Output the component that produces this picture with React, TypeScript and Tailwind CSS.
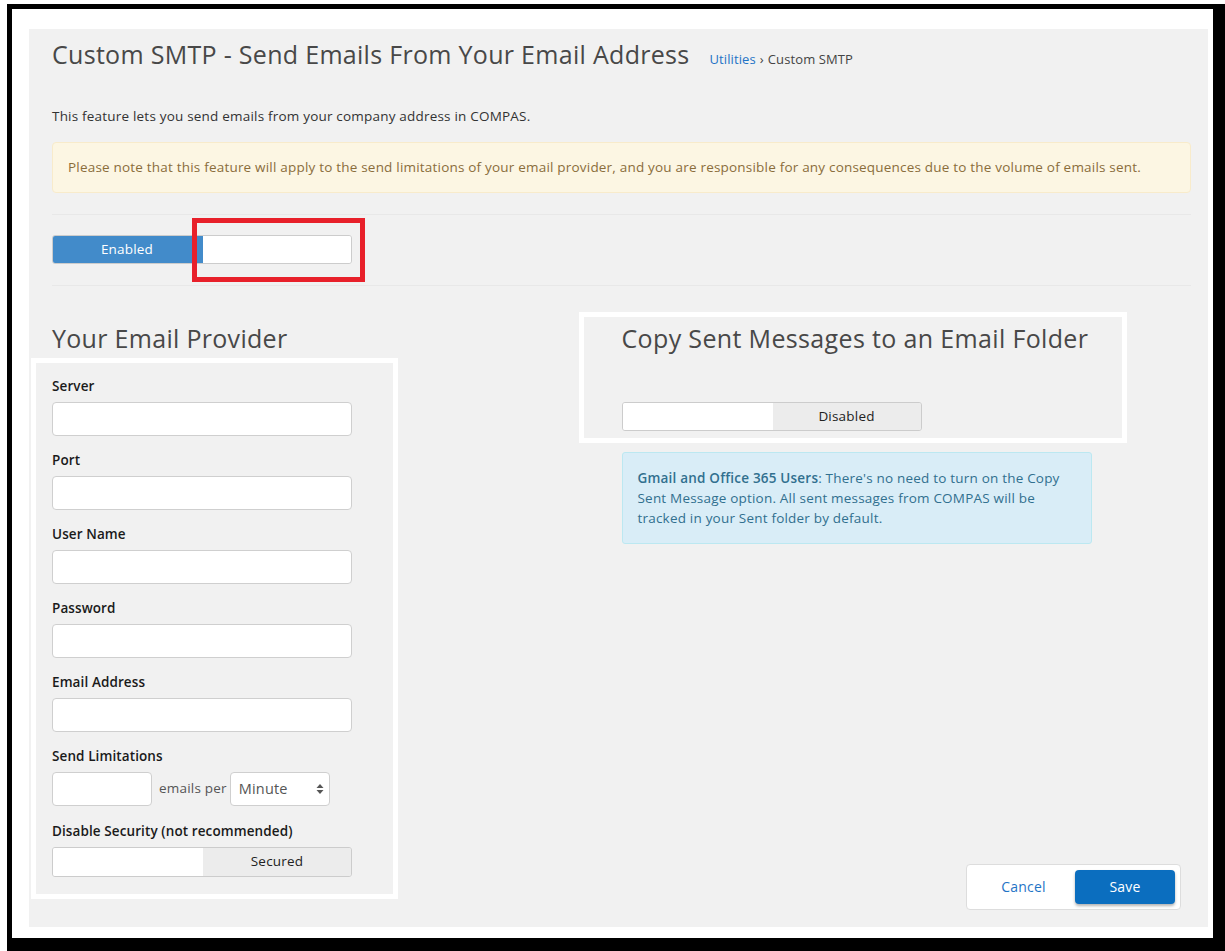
import React from "react";

const font = { fontFamily: '"Open Sans", "Noto Sans", sans-serif' };

function Field({ label }: { label: string }) {
  return (
    <div className="mb-[15px]">
      <div className="text-[13.5px] leading-[18px] font-semibold text-[#1a1a1a] mb-[7px] tracking-[0.1px]">{label}</div>
      <div className="w-[300px] h-[34px] bg-white border border-[#cfcfcf] rounded-[4px]" />
    </div>
  );
}

function UpDown() {
  return (
    <svg width="8" height="12" viewBox="0 0 8 12" className="text-[#555]">
      <path d="M4 1 L7.5 5 L0.5 5 Z" fill="currentColor" />
      <path d="M4 11 L7.5 7 L0.5 7 Z" fill="currentColor" />
    </svg>
  );
}

export default function App() {
  return (
    <div className="w-[1225px] h-[951px] overflow-hidden bg-white pl-[7px] pt-[4px]" style={font}>
      <div className="w-[1221px] h-[949px] border-black border-l-[5px] border-t-[5px] border-r-[15px] border-b-[15px] pl-[17px] pt-[20px]">
        <div className="w-[1179px] h-[898px] bg-[#f1f1f1] pl-[23px] pr-[17px] pt-[10px] flex flex-col">
          {/* Header */}
          <div className="flex items-baseline">
            <h1 className="text-[25px] leading-[30px] text-[#484848] font-normal tracking-[0.3px]">
              Custom SMTP - Send Emails From Your Email Address
            </h1>
            <div className="ml-[20px] text-[13px] text-[#444] tracking-[0.1px]">
              <span className="text-[#1f74c6]">Utilities</span>
              <span className="mx-[4px]">›</span>
              <span>Custom SMTP</span>
            </div>
          </div>

          <p className="mt-[36px] text-[13.5px] leading-[20px] text-[#333] tracking-[0.2px]">
            This feature lets you send emails from your company address in COMPAS.
          </p>

          <div className="mt-[16px] h-[51px] flex items-center px-[15px] bg-[#fcf6e3] border border-[#f8ebcb] rounded-[4px] text-[13.5px] text-[#8a6d3b] tracking-[0.2px]">
            Please note that this feature will apply to the send limitations of your email provider, and you are responsible for any consequences due to the volume of emails sent.
          </div>

          <div className="mt-[21px] h-px bg-[#e8e8e8]" />

          {/* Enabled toggle */}
          <div className="mt-[20px] relative w-[300px] h-[29px] flex rounded-[3px] border border-[#cccccc] overflow-hidden text-[13.5px] tracking-[0.2px]">
            <div className="w-[148px] h-full bg-[#428bca] text-white flex items-center justify-center">Enabled</div>
            <div className="flex-1 h-full bg-white border-l-[2px] border-[#428bca]" />
          </div>
          <div className="relative h-0">
            <div className="absolute left-[140px] top-[-46px] w-[173px] h-[64px] border-[5px] border-[#e8202a]" />
          </div>

          <div className="mt-[21px] h-px bg-[#e8e8e8]" />

          {/* Columns */}
          <div className="mt-[38px] grid grid-cols-2">
            <div className="relative pb-[33px]">
              <div className="absolute left-[-21px] top-[34px] w-[367px] h-[541px] border-[5px] border-white" />
              <h2 className="text-[25px] leading-[28px] text-[#484848] font-normal tracking-[0.3px]">Your Email Provider</h2>
              <div className="mt-[25px]">
                <Field label="Server" />
                <Field label="Port" />
                <Field label="User Name" />
                <Field label="Password" />
                <Field label="Email Address" />
                <div className="text-[13.5px] leading-[18px] font-semibold text-[#1a1a1a] mb-[7px] tracking-[0.1px]">Send Limitations</div>
                <div className="flex items-center h-[34px]">
                  <div className="w-[100px] h-[34px] bg-white border border-[#cfcfcf] rounded-[4px]" />
                  <span className="ml-[7px] text-[13.5px] text-[#555] tracking-[0.2px]">emails per</span>
                  <div className="ml-[3px] w-[100px] h-[34px] bg-white border border-[#cfcfcf] rounded-[4px] flex items-center justify-between pl-[8px] pr-[5px] text-[14.5px] text-[#555] tracking-[0.2px]">
                    <span>Minute</span>
                    <UpDown />
                  </div>
                </div>
                <div className="mt-[16px] text-[13.5px] leading-[18px] font-semibold text-[#1a1a1a] mb-[7px] tracking-[0.1px]">
                  Disable Security (not recommended)
                </div>
                <div className="w-[300px] h-[30px] flex rounded-[3px] border border-[#cccccc] overflow-hidden text-[13.5px] text-[#222] tracking-[0.2px]">
                  <div className="w-[150px] h-full bg-white" />
                  <div className="flex-1 h-full bg-[#ececec] flex items-center justify-center">Secured</div>
                </div>
              </div>
            </div>

            <div className="relative flex flex-col">
              <div className="absolute left-[-43px] top-[-12px] w-[548px] h-[131px] border-[5px] border-white" />
              <h2 className="text-[25px] leading-[28px] text-[#484848] font-normal tracking-[0.35px]">Copy Sent Messages to an Email Folder</h2>
              <div className="mt-[50px] w-[300px] h-[29px] flex rounded-[3px] border border-[#cccccc] overflow-hidden text-[13.5px] text-[#222] tracking-[0.2px]">
                <div className="w-[150px] h-full bg-white" />
                <div className="flex-1 h-full bg-[#ececec] flex items-center justify-center">Disabled</div>
              </div>
              <div className="mt-[21px] w-[470px] bg-[#d9edf7] border border-[#bce8f1] rounded-[3px] px-[15px] py-[15px] text-[13.5px] leading-[20px] text-[#31708f] tracking-[0.2px]">
                <span className="font-semibold">Gmail and Office 365 Users</span>: There's no need to turn on the Copy Sent Message option. All sent messages from COMPAS will be tracked in your Sent folder by default.
              </div>
              <div className="mt-auto self-end mr-[10px] flex items-center p-[5px] bg-white border border-[#dddddd] rounded-[4px]">
                <button className="w-[103px] h-[34px] text-[14px] text-[#1f74c6] tracking-[0.2px]">Cancel</button>
                <button className="w-[100px] h-[34px] rounded-[4px] bg-[#0b6ebf] text-white text-[14px] tracking-[0.2px] shadow-[0_2px_3px_rgba(0,0,0,0.3)]">
                  Save
                </button>
              </div>
            </div>
          </div>
        </div>
      </div>
    </div>
  );
}
